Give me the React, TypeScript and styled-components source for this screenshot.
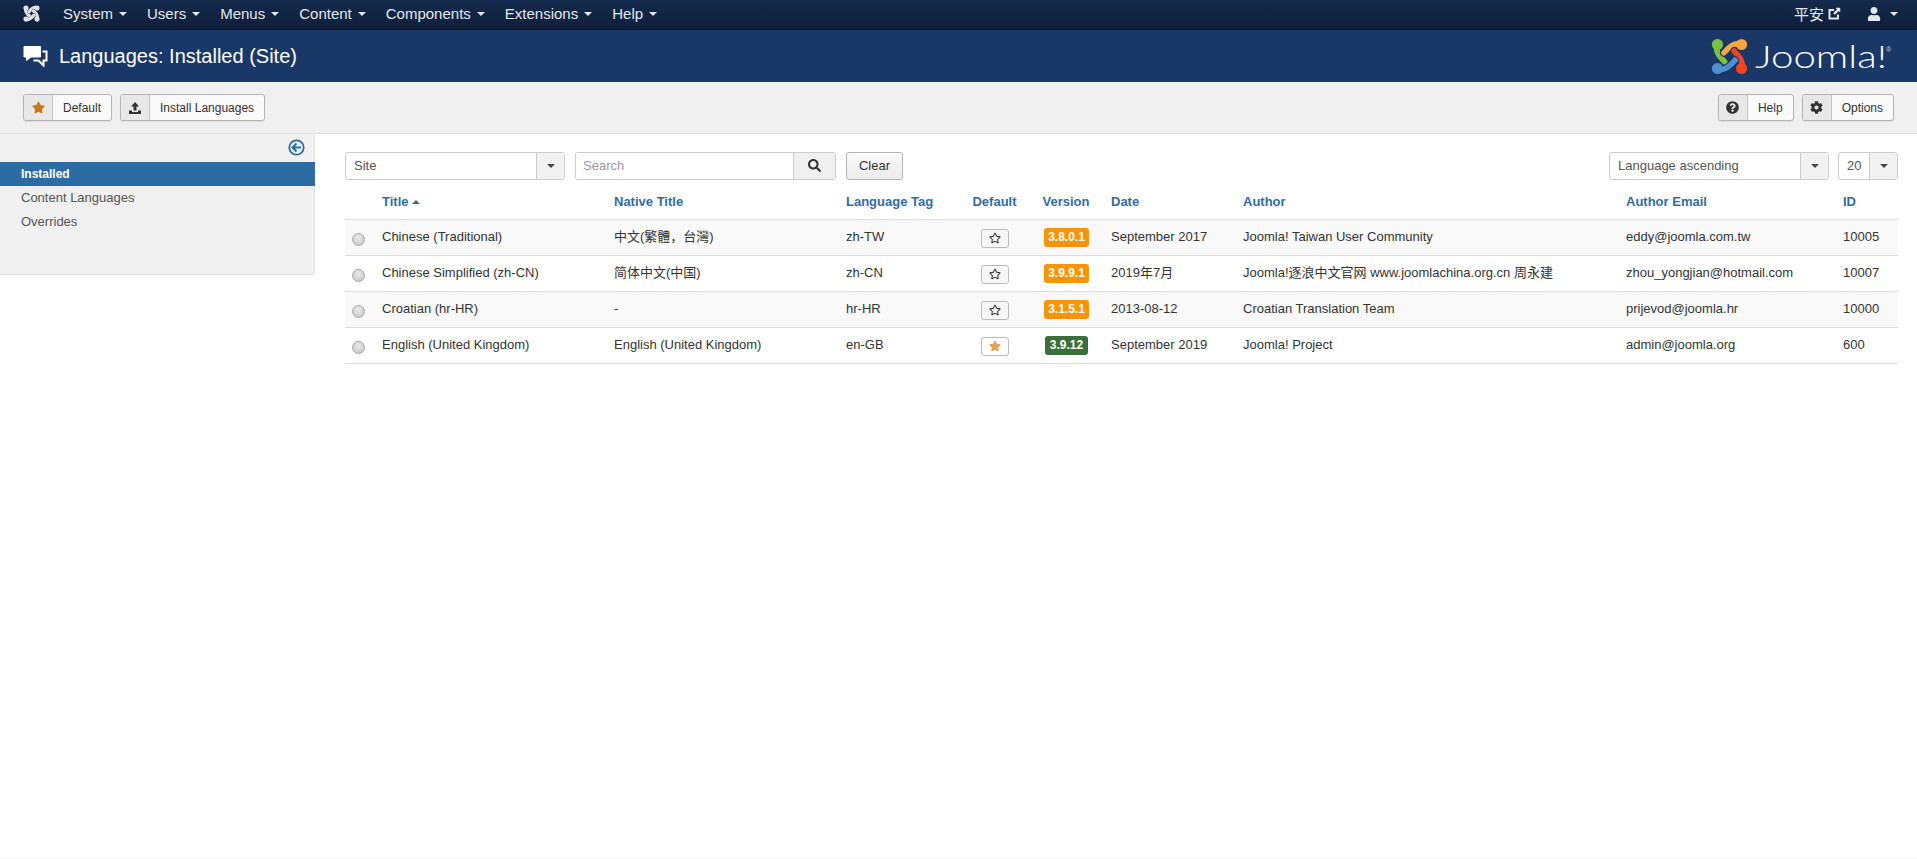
import React from "react";
import styled, { createGlobalStyle } from "styled-components";
import { FaStar, FaRegStar, FaQuestionCircle, FaCog, FaSearch, FaUser } from "react-icons/fa";

const Global = createGlobalStyle`
  html, body { margin: 0; padding: 0; background: #fff; }
  body { font-family: "Liberation Sans", "Noto Sans CJK SC", Arial, sans-serif; color: #333; font-size: 13px; }
  * { box-sizing: border-box; }
`;

const Page = styled.div`
  height: 859px; display: flex; flex-direction: column; overflow: hidden;
  border-bottom: 1px solid #f3f3f3;
`;
const Navbar = styled.nav`
  height: 30px; flex: none; display: flex; align-items: center; padding: 0 19px 2px 23px;
  background: linear-gradient(#142a4c, #0e1f3a); border-bottom: 1px solid #0b1a30; color: #e4e8ee;
`;
const NavMenu = styled.div`display: flex; align-items: center; margin-left: 13px; flex: 1;`;
const NavItem = styled.span`
  display: flex; align-items: center; padding: 0 10px; font-size: 15px; height: 27px;
`;
const Caret = styled.i<{ $up?: boolean; $gap?: number }>`
  display: inline-block; width: 0; height: 0; margin-left: ${(p) => p.$gap ?? 6}px;
  border-left: 4px solid transparent; border-right: 4px solid transparent;
  ${(p) => (p.$up ? "border-bottom" : "border-top")}: 4px solid currentColor;
`;
const NavRight = styled.div`display: flex; align-items: center; font-size: 15px;`;
const SiteLink = styled.span`display: flex; align-items: center; gap: 4px; margin-right: 26px;`;
const UserLink = styled.span`display: flex; align-items: center; font-size: 14px;`;

const Header = styled.header`
  height: 52px; flex: none; display: flex; align-items: center; justify-content: space-between;
  background: #1a3867; padding: 0 24px 0 23px; color: #fff;
`;
const TitleBox = styled.div`display: flex; align-items: center; gap: 11px;`;
const PageTitle = styled.h1`margin: 0; font-weight: 400; font-size: 20px; color: #fff;`;
const Logo = styled.div`display: flex; align-items: center; gap: 7px;`;
const Wordmark = styled.span`
  display: flex; align-items: flex-start; width: 138px; white-space: nowrap;
  font-family: Lato, "Liberation Sans", sans-serif; font-weight: 300; font-size: 31px; line-height: 38px;
`;
const WordmarkText = styled.span`
  display: block; width: 131px; color: #fff; transform: scaleX(1.3); transform-origin: left center;
`;
const Registered = styled.span`
  margin-top: 9px; font-size: 7px; line-height: 8px; color: #ccd;
  font-family: "Liberation Sans", sans-serif;
`;

const Toolbar = styled.div`
  height: 52px; flex: none; display: flex; align-items: center; justify-content: space-between;
  background: #f0f0f0; border-bottom: 1px solid #e2e2e2; padding: 0 23px;
`;
const ToolGroup = styled.div`display: flex; gap: 8px;`;
const ToolButton = styled.button`
  display: flex; align-items: stretch; height: 27px; padding: 0; border: 1px solid #b4b4b4; border-radius: 3px;
  background: #fafafa; font-family: inherit; font-size: 12px; color: #333; box-shadow: 0 1px 1px rgba(0,0,0,.08);
  overflow: hidden;
`;
const ToolIcon = styled.span<{ $color?: string }>`
  width: 29px; display: flex; align-items: center; justify-content: center;
  background: #e8e8e8; border-right: 1px solid #c4c4c4; color: ${(p) => p.$color ?? "#333"}; font-size: 13px;
`;
const ToolLabel = styled.span<{ $pad: number }>`
  display: flex; align-items: center; padding: 0 ${(p) => p.$pad}px;
`;

const Main = styled.div`display: flex; flex: 1; align-items: flex-start;`;
const Sidebar = styled.aside`
  width: 315px; height: 141px; flex: none; background: #f0f0f0;
  border-right: 1px solid #e2e2e2; border-bottom: 1px solid #ddd; border-bottom-right-radius: 3px;
  padding-top: 5px;
`;
const CollapseRow = styled.div`height: 23px; display: flex; justify-content: flex-end; padding-right: 9px; color: #2d6ca2;`;
const SideItem = styled.div<{ $active?: boolean }>`
  height: 24px; line-height: 24px; padding-left: 21px; margin-right: -1px;
  font-size: ${(p) => (p.$active ? 12 : 13)}px;
  background: ${(p) => (p.$active ? "#2d6ca2" : "transparent")};
  color: ${(p) => (p.$active ? "#fff" : "#555")};
  font-weight: ${(p) => (p.$active ? 700 : 400)};
`;

const Content = styled.section`flex: 1; min-width: 0; padding: 18px 19px 0 30px;`;
const Filters = styled.div`display: flex; align-items: center; height: 28px; margin-bottom: 3px;`;
const SelectBox = styled.div<{ $w: number; $arrow: number }>`
  width: ${(p) => p.$w}px; height: 28px; display: grid; grid-template-columns: 1fr ${(p) => p.$arrow}px;
  border: 1px solid #ccc; border-radius: 3px; background: #fff; font-size: 13px; color: #555; overflow: hidden;
`;
const SelectValue = styled.span`display: flex; align-items: center; padding: 0 0 2px 8px;`;
const SelectArrow = styled.span`
  display: flex; align-items: center; justify-content: center; background: #f2f2f2; border-left: 1px solid #ccc; color: #444;
`;
const SearchBox = styled.div`
  margin-left: 10px; width: 261px; height: 28px; display: grid; grid-template-columns: 1fr 42px;
  border: 1px solid #ccc; border-radius: 3px; overflow: hidden;
`;
const SearchInput = styled.span`display: flex; align-items: center; padding: 0 0 2px 7px; color: #999; font-size: 13px; background: #fff;`;
const SearchBtn = styled.span`
  display: flex; align-items: center; justify-content: center; background: #f0f0f0; border-left: 1px solid #ccc; color: #333; font-size: 13px; padding-bottom: 2px;
`;
const ClearBtn = styled.button`
  margin-left: 10px; width: 57px; height: 28px; border: 1px solid #b4b4b4; border-radius: 3px;
  background: linear-gradient(#fafafa, #ececec); font-family: inherit; font-size: 13px; color: #333; padding: 0 0 2px;
`;
const Spacer = styled.div`flex: 1;`;
const PerPage = styled(SelectBox)`margin-left: 9px;`;

const Table = styled.table`width: 1553px; border-collapse: collapse; table-layout: fixed;`;
const Th = styled.th<{ $center?: boolean }>`
  height: 36px; padding: 2px 8px 0; text-align: ${(p) => (p.$center ? "center" : "left")};
  font-size: 13px; line-height: 16px; font-weight: 700; color: #336c9f; border-bottom: 1px solid #ddd; white-space: nowrap;
`;
const Row = styled.tr<{ $odd: boolean }>`background: ${(p) => (p.$odd ? "#f9f9f9" : "#fff")};`;
const Td = styled.td<{ $center?: boolean }>`
  height: 36px; padding: 0 8px 1px; font-size: 13px; line-height: 16px; color: #333; border-bottom: 1px solid #ddd; white-space: nowrap;
  text-align: ${(p) => (p.$center ? "center" : "left")};
`;
const Radio = styled.span`
  display: block; width: 13px; height: 13px; border-radius: 50%; margin: 5px 0 0 -1px;
  background: radial-gradient(circle at 50% 35%, #e8e8e8, #c4c4c4); border: 1px solid #a8a8a8;
`;
const StarBtn = styled.span<{ $on?: boolean }>`
  display: inline-flex; align-items: center; justify-content: center; width: 28px; height: 19px; margin-top: 3px;
  border: 1px solid #bbb; border-radius: 3px; background: ${(p) => (p.$on ? "#fff" : "#f7f7f7")};
  color: ${(p) => (p.$on ? "#e0a458" : "#333")}; font-size: 12px; vertical-align: middle;
`;
const Badge = styled.span<{ $ok?: boolean }>`
  display: inline-block; padding: 2px 4.5px; border-radius: 3px; font-size: 12px; line-height: 15px; font-weight: 700; color: #fff;
  background: ${(p) => (p.$ok ? "#3a6f3a" : "#f89406")}; margin: 1px 0 0 1px;
`;

const JoomlaMark = ({ size, colors, bg, band, gap }: { size: number; colors: string[]; bg: string; band: number; gap: number }) => {
  const arms = [
    "M7 8 C4 14 9 20 15 26",
    "M33 7 C27 4 20 9 14 16",
    "M33 33 C36 27 31 20 25 14",
    "M7 33 C13 36 20 31 26 24",
  ];
  const ends = [[7, 7], [33, 7], [33, 33], [7, 33]];
  return (
    <svg width={size} height={size} viewBox="0 0 40 40" fill="none" strokeLinecap="round">
      {arms.map((d, i) => (
        <g key={d}>
          <path d={d} stroke={bg} strokeWidth={gap} />
          <path d={d} stroke={colors[i]} strokeWidth={band} />
          <circle cx={ends[i][0]} cy={ends[i][1]} r="6" fill={colors[i]} />
        </g>
      ))}
    </svg>
  );
};
const CommentsIcon = () => (
  <svg width="25" height="22" viewBox="0 0 25 22" fill="none">
    <path d="M1 1.5 H17.5 V12 H8 L3.5 15.5 V12 H1 Z" fill="#fff" stroke="#fff" strokeWidth="1" />
    <path d="M19.5 6.5 H23.5 V15.5 H20.5 V20.5 L15.5 15.5 H10.5" stroke="#fff" strokeWidth="2" />
  </svg>
);
const UploadIcon = () => (
  <svg width="14" height="14" viewBox="0 0 14 14" fill="#333">
    <path d="M7 1 L11 5.5 H8.5 V9.5 H5.5 V5.5 H3 Z" />
    <path d="M1 9.5 H4 V11 H10 V9.5 H13 V13 H1 Z" />
  </svg>
);
const NewTabIcon = () => (
  <svg width="13" height="13" viewBox="0 0 13 13" fill="none" stroke="#e4e8ee">
    <path d="M10 7.5 V11.5 H1.5 V3 H6" strokeWidth="2" />
    <path d="M8 1 H12 V5 L10.7 3.7 L7 7.5 L5.5 6 L9.3 2.3 Z" fill="#e4e8ee" strokeWidth="0.5" />
  </svg>
);
const CollapseIcon = () => (
  <svg width="17" height="17" viewBox="0 0 17 17" fill="none" stroke="#2d6ca2">
    <circle cx="8.5" cy="8.5" r="7.2" strokeWidth="1.8" />
    <path d="M8.5 4.5 L4.5 8.5 L8.5 12.5 M4.8 8.5 H13" strokeWidth="2" />
  </svg>
);

const menus = ["System", "Users", "Menus", "Content", "Components", "Extensions", "Help"];
const rows = [
  { t: "Chinese (Traditional)", n: "中文(繁體，台灣)", tag: "zh-TW", v: "3.8.0.1", d: "September 2017", a: "Joomla! Taiwan User Community", e: "eddy@joomla.com.tw", id: "10005" },
  { t: "Chinese Simplified (zh-CN)", n: "简体中文(中国)", tag: "zh-CN", v: "3.9.9.1", d: "2019年7月", a: "Joomla!逐浪中文官网 www.joomlachina.org.cn 周永建", e: "zhou_yongjian@hotmail.com", id: "10007" },
  { t: "Croatian (hr-HR)", n: "-", tag: "hr-HR", v: "3.1.5.1", d: "2013-08-12", a: "Croatian Translation Team", e: "prijevod@joomla.hr", id: "10000" },
  { t: "English (United Kingdom)", n: "English (United Kingdom)", tag: "en-GB", v: "3.9.12", d: "September 2019", a: "Joomla! Project", e: "admin@joomla.org", id: "600", on: true },
];
const widths = [29, 232, 232, 122, 69, 74, 132, 383, 217, 63];
const mono = ["#dfe2e6", "#dfe2e6", "#dfe2e6", "#dfe2e6"];
const brand = ["#7ac143", "#f9a541", "#f44321", "#5091cd"];

export default function App() {
  return (
    <Page>
      <Global />
      <Navbar>
        <JoomlaMark size={17} colors={mono} bg="#13284a" band={8} gap={9} />
        <NavMenu>
          {menus.map((m) => (
            <NavItem key={m}>{m}<Caret /></NavItem>
          ))}
        </NavMenu>
        <NavRight>
          <SiteLink>平安 <NewTabIcon /></SiteLink>
          <UserLink><FaUser /><Caret $gap={9} /></UserLink>
        </NavRight>
      </Navbar>
      <Header>
        <TitleBox>
          <CommentsIcon />
          <PageTitle>Languages: Installed (Site)</PageTitle>
        </TitleBox>
        <Logo>
          <JoomlaMark size={37} colors={brand} bg="#1a3867" band={6} gap={8.5} />
          <Wordmark><WordmarkText>Joomla!</WordmarkText><Registered>®</Registered></Wordmark>
        </Logo>
      </Header>
      <Toolbar>
        <ToolGroup>
          <ToolButton><ToolIcon $color="#c9791a"><FaStar /></ToolIcon><ToolLabel $pad={10}>Default</ToolLabel></ToolButton>
          <ToolButton><ToolIcon><UploadIcon /></ToolIcon><ToolLabel $pad={10}>Install Languages</ToolLabel></ToolButton>
        </ToolGroup>
        <ToolGroup>
          <ToolButton><ToolIcon><FaQuestionCircle /></ToolIcon><ToolLabel $pad={10}>Help</ToolLabel></ToolButton>
          <ToolButton><ToolIcon><FaCog /></ToolIcon><ToolLabel $pad={10}>Options</ToolLabel></ToolButton>
        </ToolGroup>
      </Toolbar>
      <Main>
        <Sidebar>
          <CollapseRow><CollapseIcon /></CollapseRow>
          <SideItem $active>Installed</SideItem>
          <SideItem>Content Languages</SideItem>
          <SideItem>Overrides</SideItem>
        </Sidebar>
        <Content>
          <Filters>
            <SelectBox $w={220} $arrow={28}><SelectValue>Site</SelectValue><SelectArrow><Caret $gap={0} /></SelectArrow></SelectBox>
            <SearchBox><SearchInput>Search</SearchInput><SearchBtn><FaSearch /></SearchBtn></SearchBox>
            <ClearBtn>Clear</ClearBtn>
            <Spacer />
            <SelectBox $w={220} $arrow={28}><SelectValue>Language ascending</SelectValue><SelectArrow><Caret $gap={0} /></SelectArrow></SelectBox>
            <PerPage $w={60} $arrow={28}><SelectValue>20</SelectValue><SelectArrow><Caret $gap={0} /></SelectArrow></PerPage>
          </Filters>
          <Table>
            <colgroup>{widths.map((w, i) => <col key={i} width={w} />)}</colgroup>
            <thead>
              <tr>
                <Th />
                <Th>Title <Caret $up $gap={0} style={{ verticalAlign: 2 }} /></Th>
                <Th>Native Title</Th>
                <Th>Language Tag</Th>
                <Th $center>Default</Th>
                <Th $center>Version</Th>
                <Th>Date</Th>
                <Th>Author</Th>
                <Th>Author Email</Th>
                <Th>ID</Th>
              </tr>
            </thead>
            <tbody>
              {rows.map((r, i) => (
                <Row key={r.tag} $odd={i % 2 === 0}>
                  <Td><Radio /></Td>
                  <Td>{r.t}</Td>
                  <Td>{r.n}</Td>
                  <Td>{r.tag}</Td>
                  <Td $center><StarBtn $on={r.on}>{r.on ? <FaStar /> : <FaRegStar />}</StarBtn></Td>
                  <Td $center><Badge $ok={r.on}>{r.v}</Badge></Td>
                  <Td>{r.d}</Td>
                  <Td>{r.a}</Td>
                  <Td>{r.e}</Td>
                  <Td>{r.id}</Td>
                </Row>
              ))}
            </tbody>
          </Table>
        </Content>
      </Main>
    </Page>
  );
}
